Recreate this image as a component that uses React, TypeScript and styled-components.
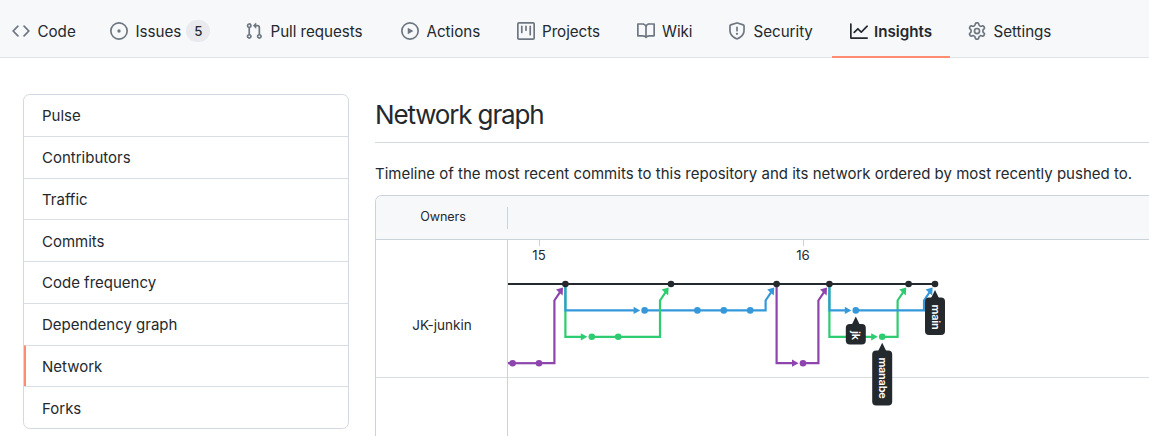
import React from "react";
import styled, { createGlobalStyle } from "styled-components";

const GlobalStyle = createGlobalStyle`
  * { box-sizing: border-box; }
  html, body { margin: 0; padding: 0; background: #fff; overflow: hidden; }
  body { font-family: Inter, "Liberation Sans", sans-serif; color: #24292e; }
`;

const Page = styled.div`
  width: 1149px;
  height: 436px;
  overflow: hidden;
  display: flex;
  flex-direction: column;
`;

const NavBar = styled.nav`
  display: flex;
  flex: none;
  height: 58px;
  padding-left: 12px;
  background: #f6f8fa;
  border-bottom: 1px solid #dfe2e6;
`;

const NavItem = styled.a<{ $width: number; $active?: boolean }>`
  display: flex;
  flex: none;
  align-items: center;
  width: ${(p) => p.$width}px;
  height: 58px;
  margin-right: ${(p) => (p.$active ? 18 : 0)}px;
  padding: 6px 0 0 ${(p) => (p.$active ? 18 : 0)}px;
  border-bottom: 2px solid ${(p) => (p.$active ? "#fd8c73" : "transparent")};
  font-size: 15.2px;
  font-weight: ${(p) => (p.$active ? 600 : 400)};
  letter-spacing: ${(p) => (p.$active ? "0" : "-0.04px")};
  color: #24292e;
  white-space: nowrap;
`;

const NavLabel = styled.span`
  padding-top: 1px;
  line-height: 24px;
`;

const NavIcon = styled.svg<{ $active?: boolean }>`
  flex: none;
  width: 18px;
  height: 18px;
  margin-right: ${(p) => (p.$active ? 6 : 7.5)}px;
  fill: ${(p) => (p.$active ? "#24292e" : "#6e7781")};
`;

const Counter = styled.span`
  display: flex;
  align-items: center;
  justify-content: center;
  width: 24px;
  height: 22px;
  margin-left: 5px;
  border-radius: 11px;
  background: #e8eaee;
  font-size: 13.2px;
  font-weight: 500;
`;

const Content = styled.main`
  display: flex;
  flex: 1;
  min-height: 0;
  padding: 36px 0 0 23px;
`;

const Menu = styled.ul`
  flex: none;
  width: 326px;
  height: 335px;
  margin: 0 26px 0 0;
  padding: 0;
  list-style: none;
  display: flex;
  flex-direction: column;
  border: 1px solid #d3d9e0;
  border-radius: 6.6px;
  overflow: hidden;
`;

const MenuItem = styled.li<{ $selected?: boolean }>`
  flex: 1;
  display: flex;
  align-items: center;
  padding-top: 1px;
  padding-left: ${(p) => (p.$selected ? 16 : 18)}px;
  border-left: ${(p) => (p.$selected ? "2px solid #fd8c73" : "none")};
  font-size: 15px;
  & + & { border-top: 1px solid #d9dee4; }
`;

const Main = styled.section`
  flex: 1;
  min-width: 0;
`;

const Title = styled.h2`
  height: 49px;
  margin: 0;
  padding-top: 2px;
  border-bottom: 1px solid #d5dae1;
  font-size: 26px;
  line-height: 37px;
  font-weight: 400;
  letter-spacing: -1.15px;
  white-space: nowrap;
`;

const Description = styled.p`
  height: 52px;
  margin: 0;
  padding-top: 18px;
  font-size: 15px;
  line-height: 25px;
  white-space: nowrap;
`;

const Graph = styled.div`
  height: 260px;
  border: 1px solid #ccd2da;
  border-right: none;
  border-radius: 6.6px 0 0 0;
  overflow: hidden;
`;

const GraphHeader = styled.div`
  display: flex;
  align-items: center;
  height: 44px;
  background: #f6f8fa;
  border-bottom: 1px solid #ccd2da;
`;

const OwnersHeading = styled.div`
  width: 132px;
  height: 22px;
  padding-left: 3px;
  border-right: 1px solid #ccd2da;
  font-size: 12.6px;
  line-height: 20px;
  letter-spacing: -0.1px;
  text-align: center;
`;

const GraphBody = styled.div`
  display: flex;
  height: 215px;
`;

const Owners = styled.div`
  flex: none;
  width: 132px;
  border-right: 1px solid #ccd2da;
`;

const OwnerCell = styled.div`
  height: 138px;
  padding: 75px 0 0 1px;
  border-bottom: 1px solid #d9dee4;
  font-size: 13.5px;
  line-height: 20px;
  text-align: center;
`;

const Timeline = styled.svg`
  flex: none;
  display: block;
  width: 641px;
  height: 197px;
`;

const TickLabel = styled.text`
  font-size: 13.2px;
  fill: #24292e;
  text-anchor: middle;
`;

const BranchLabel = styled.text`
  font-size: 11px;
  font-weight: 600;
  letter-spacing: -0.25px;
  fill: #fff;
`;

const icons = {
  code: "M4.72 3.22a.75.75 0 011.06 1.06L2.06 8l3.72 3.72a.75.75 0 11-1.06 1.06L.47 8.53a.75.75 0 010-1.06l4.25-4.25zm6.56 0a.75.75 0 10-1.06 1.06L13.94 8l-3.72 3.72a.75.75 0 101.06 1.06l4.25-4.25a.75.75 0 000-1.06l-4.25-4.25z",
  issue: "M8 1.5a6.5 6.5 0 100 13 6.5 6.5 0 000-13zM0 8a8 8 0 1116 0A8 8 0 010 8zm9.5 0a1.5 1.5 0 11-3 0 1.5 1.5 0 013 0z",
  pull: "M7.177 3.073L9.573.677A.25.25 0 0110 .854v4.792a.25.25 0 01-.427.177L7.177 3.427a.25.25 0 010-.354zM3.75 2.5a.75.75 0 100 1.5.75.75 0 000-1.5zm-2.25.75a2.25 2.25 0 113 2.122v5.256a2.251 2.251 0 11-1.5 0V5.372A2.25 2.25 0 011.5 3.25zM11 2.5h-1V4h1a1 1 0 011 1v5.628a2.251 2.251 0 101.5 0V5A2.5 2.5 0 0011 2.5zm1 10.25a.75.75 0 111.5 0 .75.75 0 01-1.5 0zM3.75 12a.75.75 0 100 1.5.75.75 0 000-1.5z",
  play: "M1.5 8a6.5 6.5 0 1113 0 6.5 6.5 0 01-13 0zM8 0a8 8 0 100 16A8 8 0 008 0zM6.379 5.227A.25.25 0 006 5.442v5.117a.25.25 0 00.379.214l4.264-2.559a.25.25 0 000-.428L6.379 5.227z",
  project: "M1.75 0A1.75 1.75 0 000 1.75v12.5C0 15.216.784 16 1.75 16h12.5A1.75 1.75 0 0016 14.25V1.75A1.75 1.75 0 0014.25 0H1.75zM1.5 1.75a.25.25 0 01.25-.25h12.5a.25.25 0 01.25.25v12.5a.25.25 0 01-.25.25H1.75a.25.25 0 01-.25-.25V1.75zM11.75 3a.75.75 0 00-.75.75v7.5a.75.75 0 001.5 0v-7.5a.75.75 0 00-.75-.75zm-8.25.75a.75.75 0 011.5 0v5.5a.75.75 0 01-1.5 0v-5.5zM8 3a.75.75 0 00-.75.75v3.5a.75.75 0 001.5 0v-3.5A.75.75 0 008 3z",
  book: "M0 1.75A.75.75 0 01.75 1h4.253c1.227 0 2.317.59 3 1.501A3.744 3.744 0 0111.006 1h4.245a.75.75 0 01.75.75v10.5a.75.75 0 01-.75.75h-4.507a2.25 2.25 0 00-1.591.659l-.622.621a.75.75 0 01-1.06 0l-.622-.621A2.25 2.25 0 005.258 13H.75a.75.75 0 01-.75-.75V1.75zm8.755 3a2.25 2.25 0 012.25-2.25H14.5v9h-3.757c-.71 0-1.4.201-1.992.572l.004-7.322zm-1.504 7.324l.004-5.073-.002-2.253A2.25 2.25 0 005.003 2.5H1.5v9h3.757a3.75 3.75 0 011.994.574z",
  shield: "M7.467.133a1.75 1.75 0 011.066 0l5.25 1.68A1.75 1.75 0 0115 3.48V7c0 1.566-.32 3.182-1.303 4.682-.983 1.498-2.585 2.813-5.032 3.855a1.7 1.7 0 01-1.33 0c-2.447-1.042-4.049-2.357-5.032-3.855C1.32 10.182 1 8.566 1 7V3.48a1.75 1.75 0 011.217-1.667l5.25-1.68zm.61 1.429a.25.25 0 00-.153 0l-5.25 1.68a.25.25 0 00-.174.238V7c0 1.358.275 2.666 1.057 3.86.784 1.194 2.121 2.34 4.366 3.297a.2.2 0 00.154 0c2.245-.956 3.582-2.104 4.366-3.298C13.225 9.666 13.5 8.36 13.5 7V3.48a.25.25 0 00-.174-.237l-5.25-1.68zM9 10.5a1 1 0 11-2 0 1 1 0 012 0zm-.25-5.75a.75.75 0 10-1.5 0v3a.75.75 0 001.5 0v-3z",
  graph: "M1.5 1.75a.75.75 0 00-1.5 0v12.5c0 .414.336.75.75.75h14.5a.75.75 0 000-1.5H1.5V1.75zm14.28 2.53a.75.75 0 00-1.06-1.06L10 7.94 7.53 5.47a.75.75 0 00-1.06 0L3.22 8.72a.75.75 0 001.06 1.06L7 7.06l2.47 2.47a.75.75 0 001.06 0l5.25-5.25z",
  gear: "M7.429 1.525a6.593 6.593 0 011.142 0c.036.003.108.036.137.146l.289 1.105c.147.56.55.967.997 1.189.174.086.341.183.501.29.417.278.97.423 1.53.27l1.102-.303c.11-.03.175.016.195.046.219.31.41.641.573.989.014.031.022.11-.059.19l-.815.806c-.411.406-.562.957-.53 1.456a4.588 4.588 0 010 .582c-.032.499.119 1.05.53 1.456l.815.806c.08.08.073.159.059.19a6.494 6.494 0 01-.573.99c-.02.029-.086.074-.195.045l-1.103-.303c-.559-.153-1.112-.008-1.529.27-.16.107-.327.204-.5.29-.449.222-.851.628-.998 1.189l-.289 1.105c-.029.11-.101.143-.137.146a6.613 6.613 0 01-1.142 0c-.036-.003-.108-.037-.137-.146l-.289-1.105c-.147-.56-.55-.967-.997-1.189a4.502 4.502 0 01-.501-.29c-.417-.278-.97-.423-1.53-.27l-1.102.303c-.11.03-.175-.016-.195-.046a6.492 6.492 0 01-.573-.989c-.014-.031-.022-.11.059-.19l.815-.806c.411-.406.562-.957.53-1.456a4.587 4.587 0 010-.582c.032-.499-.119-1.05-.53-1.456l-.815-.806c-.08-.08-.073-.159-.059-.19a6.44 6.44 0 01.573-.99c.02-.029.086-.075.195-.045l1.103.303c.559.153 1.112.008 1.529-.27.16-.107.327-.204.5-.29.449-.222.851-.628.998-1.189l.289-1.105c.029-.11.101-.143.137-.146zM8 0c-.236 0-.47.01-.701.03-.743.065-1.29.615-1.458 1.261l-.29 1.106c-.017.066-.078.158-.211.224a5.994 5.994 0 00-.668.386c-.123.082-.233.09-.3.071L3.27 2.776c-.644-.177-1.392.02-1.82.63a7.977 7.977 0 00-.704 1.217c-.315.675-.111 1.422.363 1.891l.815.806c.05.048.098.147.088.294a6.084 6.084 0 000 .772c.01.147-.038.246-.088.294l-.815.806c-.474.469-.678 1.216-.363 1.891.2.428.436.835.704 1.218.428.609 1.176.806 1.82.63l1.103-.303c.066-.019.176-.011.299.071.213.143.436.272.668.386.133.066.194.158.212.224l.289 1.106c.169.646.715 1.196 1.458 1.26a8.094 8.094 0 001.402 0c.743-.064 1.29-.614 1.458-1.26l.29-1.106c.017-.066.078-.158.211-.224a5.98 5.98 0 00.668-.386c.123-.082.233-.09.3-.071l1.102.302c.644.177 1.392-.02 1.82-.63.268-.382.505-.789.704-1.217.315-.675.111-1.422-.364-1.891l-.814-.806c-.05-.048-.098-.147-.088-.294a6.1 6.1 0 000-.772c-.01-.147.039-.246.088-.294l.814-.806c.475-.469.679-1.216.364-1.891a7.992 7.992 0 00-.704-1.218c-.428-.609-1.176-.806-1.82-.63l-1.103.303c-.066.019-.176.011-.299-.071a5.991 5.991 0 00-.668-.386c-.133-.066-.194-.158-.212-.224L10.16 1.29C9.99.645 9.444.095 8.701.031A8.094 8.094 0 008 0zm1.5 8a1.5 1.5 0 11-3 0 1.5 1.5 0 013 0zM11 8a3 3 0 11-6 0 3 3 0 016 0z",
};

interface Tab {
  label: string;
  icon: keyof typeof icons;
  width: number;
  count?: number;
  active?: boolean;
}

const tabs: Tab[] = [
  { label: "Code", icon: "code", width: 98 },
  { label: "Issues", icon: "issue", width: 135, count: 5 },
  { label: "Pull requests", icon: "pull", width: 156 },
  { label: "Actions", icon: "play", width: 115.5 },
  { label: "Projects", icon: "project", width: 120 },
  { label: "Wiki", icon: "book", width: 91.5 },
  { label: "Security", icon: "shield", width: 104 },
  { label: "Insights", icon: "graph", width: 118, active: true },
  { label: "Settings", icon: "gear", width: 110 },
];

const menu = ["Pulse", "Contributors", "Traffic", "Commits", "Code frequency", "Dependency graph", "Network", "Forks"];

const BLACK = "#24292e";
const BLUE = "#3498db";
const GREEN = "#2ecc71";
const PURPLE = "#8e44ad";

const STEP = 26.4;
const colX = (n: number) => 31 + n * STEP;
const rowY = (r: number) => 44 + r * 26.4;

/* Commits as [column, row, colour]. */
const commits: [number, number, string][] = [
  [-1, 3, PURPLE], [0, 3, PURPLE], [1, 0, BLACK], [2, 2, GREEN], [3, 2, GREEN], [4, 1, BLUE],
  [5, 0, BLACK], [6, 1, BLUE], [7, 1, BLUE], [8, 1, BLUE], [9, 0, BLACK], [10, 3, PURPLE],
  [11, 0, BLACK], [12, 1, BLUE], [13, 2, GREEN], [14, 0, BLACK], [15, 0, BLACK],
];

function Fork({ from, to, row, color }: { from: number; to: number; row: number; color: string }) {
  const x = colX(to);
  const y = rowY(row);
  return (
    <g>
      <path d={`M${colX(from)} ${rowY(0)}V${y}H${x - 9}`} fill="none" stroke={color} strokeWidth="2.2" />
      <path d={`M${x - 11} ${y - 3.6}L${x - 4.4} ${y}L${x - 11} ${y + 3.6}Z`} fill={color} />
    </g>
  );
}

function Merge({ from, to, row, color }: { from: number; to: number; row: number; color: string }) {
  const x = colX(to);
  const y = rowY(0);
  return (
    <g>
      <path d={`M${colX(from)} ${rowY(row)}H${x - 11}V${y + 16.5}L${x - 5.2} ${y + 7.8}`} fill="none" stroke={color} strokeWidth="2.2" />
      <path d={`M${x - 2.4} ${y + 3.6}L${x - 9.4} ${y + 5.6}L${x - 2.8} ${y + 11.4}Z`} fill={color} />
    </g>
  );
}

function Branch({ name, col, row, length }: { name: string; col: number; row: number; length: number }) {
  return (
    <g transform={`translate(${colX(col)} ${rowY(row)})`}>
      <path d="M0 6L-4.4 15H4.4Z" fill={BLACK} />
      <rect x="-10" y="13.6" width="20" height={length} rx="4" fill={BLACK} />
      <BranchLabel transform="translate(-3.4 20.6) rotate(90)">{name}</BranchLabel>
    </g>
  );
}

export default function App() {
  return (
    <Page>
      <GlobalStyle />
      <NavBar>
        {tabs.map((t) => (
          <NavItem key={t.label} $width={t.width} $active={t.active}>
            <NavIcon viewBox="0 0 16 16" fillRule="evenodd" $active={t.active}>
              <path d={icons[t.icon]} />
            </NavIcon>
            <NavLabel>{t.label}</NavLabel>
            {t.count !== undefined && <Counter>{t.count}</Counter>}
          </NavItem>
        ))}
      </NavBar>
      <Content>
        <Menu>
          {menu.map((m) => (
            <MenuItem key={m} $selected={m === "Network"}>{m}</MenuItem>
          ))}
        </Menu>
        <Main>
          <Title>Network graph</Title>
          <Description>
            Timeline of the most recent commits to this repository and its network ordered by most recently pushed to.
          </Description>
          <Graph>
            <GraphHeader>
              <OwnersHeading>Owners</OwnersHeading>
            </GraphHeader>
            <GraphBody>
              <Owners>
                <OwnerCell>JK-junkin</OwnerCell>
              </Owners>
              <Timeline viewBox="0 0 641 197">
                <path d="M0 137.5H641" stroke="#d9dee4" />
                <path d="M31.5 0V6M295.5 0V6" stroke="#ccd2da" />
                <TickLabel x="31" y="20">15</TickLabel>
                <TickLabel x="295" y="20">16</TickLabel>
                <path d={`M0 ${rowY(3)}H${colX(0)}`} stroke={PURPLE} strokeWidth="2.2" />
                <Merge from={0} to={1} row={3} color={PURPLE} />
                <Fork from={1} to={2} row={2} color={GREEN} />
                <Fork from={1} to={4} row={1} color={BLUE} />
                <Merge from={4} to={9} row={1} color={BLUE} />
                <Merge from={2} to={5} row={2} color={GREEN} />
                <Fork from={9} to={10} row={3} color={PURPLE} />
                <Merge from={10} to={11} row={3} color={PURPLE} />
                <Fork from={11} to={13} row={2} color={GREEN} />
                <Fork from={11} to={12} row={1} color={BLUE} />
                <Merge from={13} to={14} row={2} color={GREEN} />
                <Merge from={12} to={15} row={1} color={BLUE} />
                <path d={`M0 ${rowY(0)}H${colX(15)}`} stroke={BLACK} strokeWidth="2.2" />
                {commits.map(([c, r, color]) => (
                  <circle key={c} cx={colX(c)} cy={rowY(r)} r="3.3" fill={color} />
                ))}
                <Branch name="jk" col={12} row={1} length={20.5} />
                <Branch name="manabe" col={13} row={2} length={55} />
                <Branch name="main" col={15} row={0} length={37.5} />
              </Timeline>
            </GraphBody>
          </Graph>
        </Main>
      </Content>
    </Page>
  );
}
